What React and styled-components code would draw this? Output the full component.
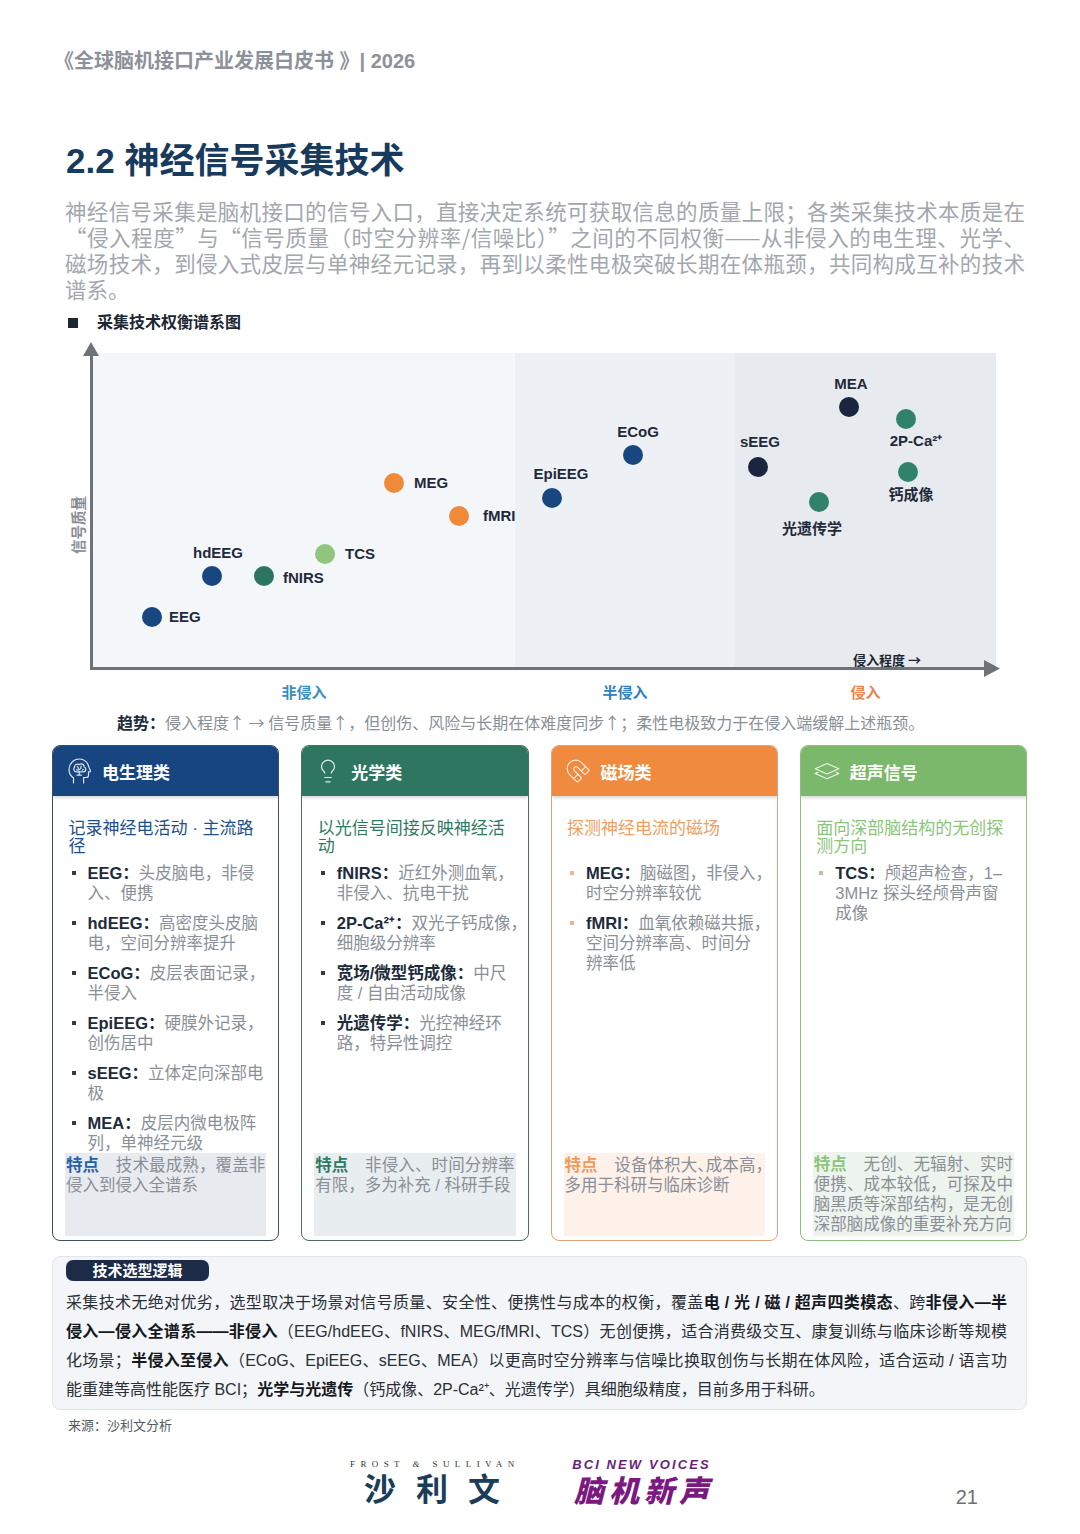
import React from 'react';
import styled, { createGlobalStyle } from 'styled-components';
import { Lightbulb, Magnet } from 'lucide-react';

const GlobalStyle = createGlobalStyle`
  html, body {
    margin: 0;
    padding: 0;
    background: #fff;
  }
  body {
    font-family: "Liberation Sans", "Noto Sans CJK SC", sans-serif;
  }
  * {
    box-sizing: border-box;
  }
`;

const CJK = '"Noto Sans CJK SC", "Liberation Sans", sans-serif';

const Page = styled.div`
  position: relative;
  width: 1080px;
  height: 1534px;
  padding: 0 53px 0 52px;
  overflow: hidden;
`;

const RunningHead = styled.div`
  margin-top: 49px;
  padding-left: 2px;
  font-size: 20px;
  line-height: 24px;
  font-weight: 700;
  color: #8d9199;
`;

const Title = styled.h1`
  margin: 66px 0 0;
  padding-left: 14px;
  font-size: 35px;
  line-height: 44px;
  font-weight: 700;
  color: #183a5d;
`;

const Intro = styled.div`
  margin: 15px 0 0 13px;
  width: 960px;
  font-family: ${CJK};
  font-size: 21.5px;
  line-height: 26px;
  color: #a3a7ad;
`;

const Line = styled.span`
  display: block;
  text-align: ${(p) => (p.$last ? 'left' : 'justify')};
  text-align-last: ${(p) => (p.$last ? 'left' : 'justify')};
`;

const ChartHeading = styled.div`
  margin: 11px 0 0 16px;
  display: flex;
  align-items: center;
  gap: 19px;
  font-size: 16px;
  line-height: 20px;
  font-weight: 700;
  color: #1d2633;
`;

const Square = styled.span`
  width: 10px;
  height: 10px;
  background: #1d2633;
`;

const Chart = styled.div`
  position: relative;
  padding-top: 20px;
`;

const YLabel = styled.div`
  position: absolute;
  left: 25px;
  top: 192px;
  transform: translate(-50%, -50%) rotate(-90deg);
  font-size: 14.5px;
  font-weight: 700;
  color: #878c93;
  white-space: nowrap;
`;

const Plot = styled.div`
  position: relative;
  display: flex;
  margin-left: 38px;
  width: 906px;
  height: 317px;
  border-left: 3px solid #6e7379;
  border-bottom: 3px solid #6e7379;
`;

const Zone = styled.div`
  width: ${(p) => p.$w}px;
  background: ${(p) => p.$bg};
`;

const ArrowHead = styled.svg`
  position: absolute;
  overflow: visible;
`;

const Dot = styled.span`
  position: absolute;
  width: 20px;
  height: 20px;
  border-radius: 50%;
  background: ${(p) => p.$color};
  transform: translate(-50%, -50%);
`;

const PointLabel = styled.span`
  position: absolute;
  transform: ${(p) => (p.$side === 'right' ? 'translateY(-50%)' : 'translate(-50%, -50%)')};
  font-size: 15px;
  line-height: 18px;
  font-weight: 700;
  color: #1f2a3a;
  white-space: nowrap;
`;

const AxisName = styled.span`
  position: absolute;
  left: 760px;
  top: 306px;
  transform: translateY(-50%);
  font-family: ${CJK};
  font-size: 13px;
  font-weight: 700;
  color: #1d2633;
  white-space: nowrap;
`;

const ZoneLabels = styled.div`
  display: flex;
  margin: 15px 0 0 41px;
`;

const ZoneLabel = styled.div`
  width: ${(p) => p.$w}px;
  text-align: center;
  font-size: 15px;
  line-height: 16px;
  font-weight: 700;
  color: ${(p) => p.$color};
`;

const Trend = styled.div`
  margin-top: 11px;
  padding-left: 65px;
  font-family: ${CJK};
  font-size: 16px;
  line-height: 20px;
  color: #8a8f96;

  b {
    color: #1e2a3a;
  }
`;

const Cards = styled.div`
  display: grid;
  grid-template-columns: repeat(4, 1fr);
  gap: 22px;
  margin-top: 13px;
`;

const Card = styled.div`
  display: flex;
  flex-direction: column;
  border: 1.5px solid ${(p) => p.$border};
  border-radius: 8px;
  overflow: hidden;
  background: #fff;
`;

const CardHead = styled.div`
  display: flex;
  align-items: center;
  gap: 9px;
  height: 50px;
  padding-left: 12px;
  background: ${(p) => p.$bg};
  box-shadow: 0 2px 3px rgba(0, 0, 0, 0.16);
  color: #fff;
  font-size: 17px;
  font-weight: 700;
`;

const IconBox = styled.span`
  display: flex;
  align-items: center;
  justify-content: center;
  width: 28px;
  height: 30px;
  color: rgba(255, 255, 255, 0.85);
  transform: ${(p) => (p.$flip ? 'scaleX(-1)' : 'none')};
`;

const CardBody = styled.div`
  flex: 1;
  display: flex;
  flex-direction: column;
  padding: 24px 12px 4px;
`;

const Subtitle = styled.div`
  min-height: 36px;
  padding-left: 3.5px;
  font-size: 17px;
  line-height: 18px;
  color: ${(p) => p.$color};
`;

const List = styled.ul`
  display: flex;
  flex-direction: column;
  gap: 10px;
  margin: 7px 0 0;
  padding: 0;
  list-style: none;
`;

const Item = styled.li`
  display: flex;
  font-size: 16.5px;
  line-height: 20px;
  color: #8a8f96;
  white-space: nowrap;

  b {
    color: #1e2b3b;
  }
`;

const Marker = styled.span`
  flex: none;
  width: 16px;
  margin-left: 6.5px;

  &::before {
    content: '';
    display: block;
    width: 4px;
    height: 4px;
    margin-top: 8px;
    background: ${(p) => p.$color};
  }
`;

const Half = styled.span`
  font-feature-settings: "halt";
`;

const Feature = styled.div`
  margin-top: auto;
  min-height: 83px;
  padding: 2px 1px;
  background: ${(p) => p.$bg};
  font-size: 16.5px;
  line-height: 20px;
  white-space: nowrap;
  font-feature-settings: ${(p) => (p.$tight ? '"halt"' : 'normal')};
  color: #8a8f96;
`;

const FeatureTag = styled.b`
  color: ${(p) => p.$color};
`;

const LogicBox = styled.div`
  margin-top: 15px;
  padding: 3px 19px 5px 13px;
  background: #f3f5f8;
  border: 1px solid #e2e6eb;
  border-radius: 8px;
`;

const Badge = styled.div`
  width: 143px;
  height: 21px;
  border-radius: 7px;
  background: #1c2b48;
  color: #fff;
  font-size: 15px;
  line-height: 21px;
  font-weight: 700;
  text-align: center;
`;

const LogicText = styled.div`
  margin-top: 7px;
  font-size: 16px;
  line-height: 29px;
  color: #2b2f36;

  b {
    color: #15181d;
  }
`;

const Source = styled.div`
  margin-top: 8px;
  padding-left: 16px;
  font-size: 13px;
  line-height: 16px;
  color: #555a60;
`;

const Footer = styled.div`
  display: flex;
  align-items: flex-start;
  gap: 58px;
  margin-top: 24px;
  padding-left: 298px;
  padding-right: 49px;
`;

const LogoBlock = styled.div`
  display: flex;
  flex-direction: column;
  align-items: center;
`;

const FrostText = styled.div`
  font-family: "Liberation Serif", serif;
  font-size: 9px;
  line-height: 12px;
  letter-spacing: 5.4px;
  margin-right: -5.4px;
  color: #333;

  i {
    font-style: italic;
  }
`;

const ShaLiWen = styled.div`
  margin-top: 3px;
  margin-right: -20px;
  font-size: 32px;
  line-height: 34px;
  font-weight: 700;
  letter-spacing: 20px;
  color: #1c3d5a;
`;

const BciText = styled.div`
  font-size: 13px;
  line-height: 14px;
  font-weight: 700;
  font-style: italic;
  letter-spacing: 2.1px;
  color: #6b1f7a;
`;

const BciCn = styled.div`
  margin-top: 4px;
  margin-right: -5px;
  font-size: 30px;
  line-height: 32px;
  font-weight: 900;
  font-style: italic;
  letter-spacing: 5px;
  color: #7a1a80;
`;

const PageNum = styled.div`
  margin-left: auto;
  margin-top: 27px;
  font-size: 20px;
  line-height: 24px;
  color: #6d7177;
`;

const zones = [
  { w: 422, bg: '#f4f7fa', label: '非侵入', color: '#3a8ec0' },
  { w: 220, bg: '#edf1f6', label: '半侵入', color: '#2f80c0' },
  { w: 261, bg: '#e7ebf0', label: '侵入', color: '#e8854d' },
];

const BLUE = '#18467f';
const NAVY = '#1a2540';
const TEAL = '#2e7560';
const LIME = '#8fc57c';
const ORANGE = '#ef8a3a';
const GREEN = '#30836a';

const points = [
  { name: 'EEG', x: 59, y: 264, color: BLUE, lx: 76, ly: 264, side: 'right' },
  { name: 'hdEEG', x: 119, y: 223, color: BLUE, lx: 125, ly: 200 },
  { name: 'fNIRS', x: 171, y: 223, color: TEAL, lx: 190, ly: 225, side: 'right' },
  { name: 'TCS', x: 232, y: 201, color: LIME, lx: 252, ly: 201, side: 'right' },
  { name: 'MEG', x: 301, y: 130, color: ORANGE, lx: 321, ly: 130, side: 'right' },
  { name: 'fMRI', x: 366, y: 163, color: ORANGE, lx: 390, ly: 163, side: 'right' },
  { name: 'EpiEEG', x: 459, y: 145, color: BLUE, lx: 468, ly: 121 },
  { name: 'ECoG', x: 540, y: 102, color: BLUE, lx: 545, ly: 79 },
  { name: 'sEEG', x: 665, y: 114, color: NAVY, lx: 667, ly: 89 },
  { name: 'MEA', x: 756, y: 54, color: NAVY, lx: 758, ly: 31 },
  { name: '2P-Ca²⁺', x: 813, y: 66, color: GREEN, lx: 823, ly: 88 },
  { name: '钙成像', x: 815, y: 119, color: GREEN, lx: 818, ly: 142 },
  { name: '光遗传学', x: 726, y: 149, color: GREEN, lx: 719, ly: 176 },
];

function BrainHeadIcon() {
  return (
    <svg width="24" height="28" viewBox="0 0 24 28" fill="none" stroke="currentColor" strokeWidth="1.2" strokeLinecap="round" strokeLinejoin="round">
      <path d="M6.5 26v-5C3.8 19.2 2 16.2 2 12.6 2 6.8 6.6 2 12.3 2c4.9 0 8.9 3.5 9.6 8.2l1.6 3.6c.2.5-.1 1-.7 1h-1.3v3.4c0 1.3-1 2.3-2.3 2.3h-2.6V26" />
      <path d="M7.4 10.2c0-1.7 1.3-3 3-3 .6 0 1.2.2 1.7.5.5-.5 1.2-.8 2-.8 1.6 0 2.9 1.2 3 2.8 1 .4 1.7 1.4 1.7 2.5 0 1.5-1.2 2.7-2.7 2.7h-6.6c-1.5 0-2.7-1.2-2.7-2.7 0-.8.3-1.5.9-2z" />
      <path d="M10.3 9.6c.6.4 1 1 1 1.8M14.2 9.2c-.4.6-.5 1.3-.2 2M9.6 12.9h2.6l1.2-1.2M15.3 13.2l.9-.9" />
      <path d="M12.2 15v3.2M10 18.2h4.4" />
    </svg>
  );
}

function LayersIcon() {
  return (
    <svg width="30" height="22" viewBox="0 0 32 22" fill="none" stroke="currentColor" strokeWidth="1.2" strokeLinejoin="round">
      <path d="M16 2.5 29.5 8.5 16 14.5 2.5 8.5Z" />
      <path d="M6 12.2 2.5 13.8 16 19.8 29.5 13.8 26 12.2" />
    </svg>
  );
}

// punctuation that ends a wrapped line is set half width, as the print layout does
function renderLines(lines) {
  return lines.map((text, i) => {
    const wrapped = i < lines.length - 1 && /[，、]$/.test(text);
    return (
      <React.Fragment key={i}>
        {i > 0 && <br />}
        {wrapped ? (
          <>
            {text.slice(0, -1)}
            <Half>{text.slice(-1)}</Half>
          </>
        ) : (
          text
        )}
      </React.Fragment>
    );
  });
}

const cards = [
  {
    title: '电生理类',
    icon: <BrainHeadIcon />,
    head: '#17457f',
    border: '#3e4c5c',
    sub: '记录神经电活动 · 主流路径',
    subColor: '#1f4f8a',
    marker: '#333a44',
    items: [
      ['EEG', ['头皮脑电，非侵', '入、便携']],
      ['hdEEG', ['高密度头皮脑', '电，空间分辨率提升']],
      ['ECoG', ['皮层表面记录，', '半侵入']],
      ['EpiEEG', ['硬膜外记录，', '创伤居中']],
      ['sEEG', ['立体定向深部电', '极']],
      ['MEA', ['皮层内微电极阵', '列，单神经元级']],
    ],
    tagColor: '#2660a8',
    featureBg: '#e7ebf0',
    feature: ['技术最成熟，覆盖非', '侵入到侵入全谱系'],
  },
  {
    title: '光学类',
    icon: <Lightbulb size={26} strokeWidth={1.1} />,
    head: '#2e7660',
    border: '#4f6b62',
    sub: '以光信号间接反映神经活动',
    subColor: '#2f7a62',
    marker: '#333a44',
    items: [
      ['fNIRS', ['近红外测血氧，', '非侵入、抗电干扰']],
      ['2P-Ca²⁺', ['双光子钙成像，', '细胞级分辨率']],
      ['宽场/微型钙成像', ['中尺', '度 / 自由活动成像']],
      ['光遗传学', ['光控神经环', '路，特异性调控']],
    ],
    tagColor: '#2f7a62',
    featureBg: '#e8eef0',
    feature: ['非侵入、时间分辨率', '有限，多为补充 / 科研手段'],
  },
  {
    title: '磁场类',
    icon: <Magnet size={26} strokeWidth={1.1} />,
    flip: true,
    head: '#f08a3f',
    border: '#dca47c',
    sub: '探测神经电流的磁场',
    subColor: '#eea062',
    marker: '#f0b48a',
    items: [
      ['MEG', ['脑磁图，非侵入，', '时空分辨率较优']],
      ['fMRI', ['血氧依赖磁共振，', '空间分辨率高、时间分', '辨率低']],
    ],
    tagColor: '#f09a5a',
    featureBg: '#fdf1ea',
    tight: true,
    feature: ['设备体积大、成本高，', '多用于科研与临床诊断'],
  },
  {
    title: '超声信号',
    icon: <LayersIcon />,
    head: '#7cb86b',
    border: '#8fbe84',
    sub: '面向深部脑结构的无创探测方向',
    subColor: '#8cc47c',
    marker: '#a9c9a1',
    items: [['TCS', ['颅超声检查，1–', '3MHz 探头经颅骨声窗', '成像']]],
    tagColor: '#8cc47c',
    featureBg: '#edf3ed',
    feature: ['无创、无辐射、实时', '便携、成本较低，可探及中', '脑黑质等深部结构，是无创', '深部脑成像的重要补充方向'],
  },
];

export default function App() {
  return (
    <Page>
      <GlobalStyle />
      <RunningHead>《全球脑机接口产业发展白皮书 》| 2026</RunningHead>
      <Title>2.2 神经信号采集技术</Title>

      <Intro>
        <Line>神经信号采集是脑机接口的信号入口，直接决定系统可获取信息的质量上限；各类采集技术本质是在</Line>
        <Line>“侵入程度”与“信号质量（时空分辨率/信噪比）”之间的不同权衡——从非侵入的电生理、光学、</Line>
        <Line>磁场技术，到侵入式皮层与单神经元记录，再到以柔性电极突破长期在体瓶颈，共同构成互补的技术</Line>
        <Line $last>谱系。</Line>
      </Intro>

      <ChartHeading>
        <Square />
        采集技术权衡谱系图
      </ChartHeading>

      <Chart>
        <YLabel>信号质量</YLabel>
        <Plot>
          {zones.map((z) => (
            <Zone key={z.label} $w={z.w} $bg={z.bg} />
          ))}
          <ArrowHead width="16" height="14" style={{ left: -10, top: -11 }}>
            <polygon points="8,0 0,14 16,14" fill="#6e7379" />
          </ArrowHead>
          <ArrowHead width="16" height="17" style={{ left: 891, top: 307 }}>
            <polygon points="0,0 16,8.5 0,17" fill="#6e7379" />
          </ArrowHead>
          {points.map((p) => (
            <React.Fragment key={p.name}>
              <Dot $color={p.color} style={{ left: p.x, top: p.y }} />
              <PointLabel $side={p.side} style={{ left: p.lx, top: p.ly }}>
                {p.name}
              </PointLabel>
            </React.Fragment>
          ))}
          <AxisName>侵入程度 →</AxisName>
        </Plot>
        <ZoneLabels>
          {zones.map((z) => (
            <ZoneLabel key={z.label} $w={z.w} $color={z.color}>
              {z.label}
            </ZoneLabel>
          ))}
        </ZoneLabels>
      </Chart>

      <Trend>
        <b>趋势：</b>侵入程度↑ → 信号质量↑，但创伤、风险与长期在体难度同步↑；柔性电极致力于在侵入端缓解上述瓶颈。
      </Trend>

      <Cards>
        {cards.map((c) => (
          <Card key={c.title} $border={c.border}>
            <CardHead $bg={c.head}>
              <IconBox $flip={c.flip}>{c.icon}</IconBox>
              {c.title}
            </CardHead>
            <CardBody>
              <Subtitle $color={c.subColor}>{c.sub}</Subtitle>
              <List>
                {c.items.map(([term, lines]) => (
                  <Item key={term}>
                    <Marker $color={c.marker} />
                    <span>
                      <b>{term}：</b>
                      {renderLines(lines)}
                    </span>
                  </Item>
                ))}
              </List>
              <Feature $bg={c.featureBg} $tight={c.tight}>
                {c.feature.map((text, i) => (
                  <Line key={i} $last={i === c.feature.length - 1}>
                    {i === 0 && <FeatureTag $color={c.tagColor}>特点　</FeatureTag>}
                    {text}
                  </Line>
                ))}
              </Feature>
            </CardBody>
          </Card>
        ))}
      </Cards>

      <LogicBox>
        <Badge>技术选型逻辑</Badge>
        <LogicText>
          <Line>
            采集技术无绝对优劣，选型取决于场景对信号质量、安全性、便携性与成本的权衡，覆盖<b>电 / 光 / 磁 / 超声四类模态</b>、跨<b>非侵入—半</b>
          </Line>
          <Line>
            <b>侵入—侵入全谱系——非侵入</b>（EEG/hdEEG、fNIRS、MEG/fMRI、TCS）无创便携，适合消费级交互、康复训练与临床诊断等规模
          </Line>
          <Line>
            化场景；<b>半侵入至侵入</b>（ECoG、EpiEEG、sEEG、MEA）以更高时空分辨率与信噪比换取创伤与长期在体风险，适合运动 / 语言功
          </Line>
          <Line $last>
            能重建等高性能医疗 BCI；<b>光学与光遗传</b>（钙成像、2P-Ca²⁺、光遗传学）具细胞级精度，目前多用于科研。
          </Line>
        </LogicText>
      </LogicBox>

      <Source>来源：沙利文分析</Source>

      <Footer>
        <LogoBlock>
          <FrostText>
            FROST <i>&amp;</i> SULLIVAN
          </FrostText>
          <ShaLiWen>沙利文</ShaLiWen>
        </LogoBlock>
        <LogoBlock>
          <BciText>BCI NEW VOICES</BciText>
          <BciCn>脑机新声</BciCn>
        </LogoBlock>
        <PageNum>21</PageNum>
      </Footer>
    </Page>
  );
}
